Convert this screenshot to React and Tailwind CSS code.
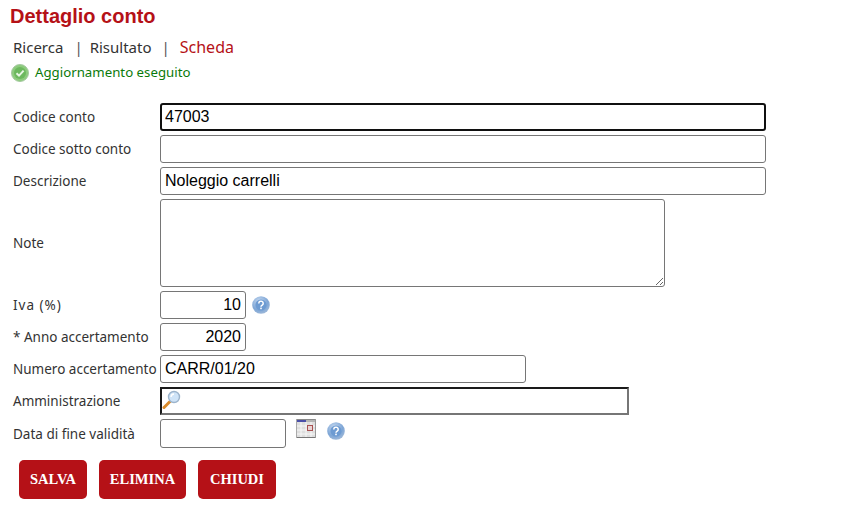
const lab = "w-[147px] shrink-0 pt-[1px] text-[13.5px] text-[#333] whitespace-nowrap";
const inp = "h-[28px] bg-white border border-[#767676] rounded-[3px] px-[4px] text-[16px] text-black outline-none font-['Liberation_Sans',sans-serif]";

function Help() {
  return (
    <svg width="18" height="18" viewBox="0 0 18 18" className="shrink-0">
      <defs>
        <radialGradient id="hg" cx="0.4" cy="0.3" r="0.8">
          <stop offset="0" stopColor="#c6d9f0" />
          <stop offset="0.6" stopColor="#7ea6d6" />
          <stop offset="1" stopColor="#a9bfda" />
        </radialGradient>
      </defs>
      <circle cx="9" cy="9" r="8.8" fill="url(#hg)" />
      <circle cx="9" cy="9" r="5.6" fill="#6d9bd2" />
      <path d="M6.8 7.4a2.2 2.2 0 1 1 3.4 1.8c-.8.5-1.2.8-1.2 1.6" fill="none" stroke="#fff" strokeWidth="1.5" />
      <rect x="8.2" y="11.6" width="1.6" height="1.6" fill="#fff" />
    </svg>
  );
}

function Calendar() {
  return (
    <svg width="20" height="19" viewBox="0 0 20 19" className="shrink-0">
      <rect x="0" y="0" width="20" height="19" fill="#dedede" />
      <rect x="0" y="0" width="20" height="1" fill="#8a8a8a" />
      <rect x="1" y="1" width="9" height="2" fill="#4a4fa8" />
      <rect x="10" y="1" width="10" height="2" fill="#b5b5b5" />
      <path d="M0 7h20M0 11h20M0 15h20M5 3v16M10 3v16M15 3v16" stroke="#f7f7f7" strokeWidth="1" />
      <rect x="11.5" y="6.5" width="5" height="5" fill="#e8d4d4" stroke="#a85050" strokeWidth="1" />
      <rect x="0" y="18" width="20" height="1" fill="#777" />
      <rect x="19" y="0" width="1" height="19" fill="#999" />
      <rect x="0" y="0" width="1" height="19" fill="#aaa" />
    </svg>
  );
}

function Lens() {
  return (
    <svg width="20" height="20" viewBox="0 0 20 20">
      <path d="M8 11.5 2 17.5" stroke="#d98a2b" strokeWidth="3" strokeLinecap="round" />
      <circle cx="12" cy="7" r="5.5" fill="#cfe4f8" stroke="#9cb4cc" strokeWidth="1.4" />
      <path d="M9 7a3.2 3.2 0 0 1 3-3" stroke="#fff" strokeWidth="1.4" fill="none" />
    </svg>
  );
}

function Check() {
  return (
    <svg width="18" height="18" viewBox="0 0 18 18" className="shrink-0">
      <circle cx="9" cy="9" r="8.5" fill="#8ccb7c" stroke="#a5c9a0" strokeWidth="1" />
      <circle cx="9" cy="9" r="6" fill="#6cb85e" />
      <path d="M5.5 9.2 8 11.6l4.6-5" fill="none" stroke="#e8f5e4" strokeWidth="2" />
    </svg>
  );
}

function Btn({ children, w }) {
  return (
    <button className={`${w} h-[39px] bg-[#b51117] rounded-[5px] text-white text-[14.5px] font-bold font-['Liberation_Serif',serif]`}>
      {children}
    </button>
  );
}

export default function App() {
  return (
    <div className="w-[862px] h-[523px] bg-white overflow-hidden font-['Noto_Sans',sans-serif]">
      <div className="pl-[10px] pt-[6px]">
        <h1 className="text-[20px] leading-[21px] font-bold text-[#b51117] font-['Liberation_Sans',sans-serif]">Dettaglio conto</h1>
      </div>
      <div className="pl-[13px] mt-[9px] flex items-center h-[22px] text-[15px] text-[#333]">
        <span>Ricerca</span>
        <span className="ml-[11px] mr-[7px] text-[#555]">|</span>
        <span>Risultato</span>
        <span className="ml-[10px] mr-[10px] text-[#555]">|</span>
        <span className="text-[#b51117] text-[16px]">Scheda</span>
      </div>
      <div className="pl-[11px] mt-[6px] flex items-center gap-[6px] h-[18px] text-[13.25px] text-[#0a7a0a]">
        <Check />
        <span>Aggiornamento eseguito</span>
      </div>
      <div className="ml-[13px] mt-[21px] flex flex-col gap-[4px]">
        <div className="flex items-center">
          <span className={lab}>Codice conto</span>
          <input readOnly value="47003" className="w-[606px] h-[28px] bg-white border-2 border-[#101010] rounded-[3px] px-[3px] text-[16px] text-black outline-none font-['Liberation_Sans',sans-serif]" />
        </div>
        <div className="flex items-center">
          <span className={lab}>Codice sotto conto</span>
          <input readOnly value="" className={`${inp} w-[606px]`} />
        </div>
        <div className="flex items-center">
          <span className={lab}>Descrizione</span>
          <input readOnly value="Noleggio carrelli" className={`${inp} w-[606px]`} />
        </div>
        <div className="flex items-center">
          <span className={lab}>Note</span>
          <textarea readOnly value="" className="w-[505px] h-[88px] bg-white border border-[#767676] rounded-[3px] outline-none block" />
        </div>
        <div className="flex items-center">
          <span className={`${lab} tracking-[1px]`}>Iva (%)</span>
          <input readOnly value="10" className={`${inp} w-[86px] text-right`} />
          <span className="ml-[6px] flex"><Help /></span>
        </div>
        <div className="flex items-center">
          <span className={lab}>* Anno accertamento</span>
          <input readOnly value="2020" className={`${inp} w-[86px] text-right`} />
        </div>
        <div className="flex items-center">
          <span className={lab}>Numero accertamento</span>
          <input readOnly value="CARR/01/20" className={`${inp} w-[366px]`} />
        </div>
        <div className="flex items-center">
          <span className={lab}>Amministrazione</span>
          <div className="w-[469px] h-[28px] bg-white border-2 border-t-[#1a1a1a] border-l-[#1a1a1a] border-r-[#767676] border-b-[#767676] flex items-start pt-[1px]">
            <Lens />
          </div>
        </div>
        <div className="flex items-center">
          <span className={lab}>Data di fine validità</span>
          <input readOnly value="" className={`${inp} w-[126px] h-[29px]`} />
          <span className="ml-[10px] mb-[10px] flex"><Calendar /></span>
          <span className="ml-[11px] mb-[5px] flex"><Help /></span>
        </div>
      </div>
      <div className="ml-[19px] mt-[12px] flex gap-[12px]">
        <Btn w="w-[68px]">SALVA</Btn>
        <Btn w="w-[87px]">ELIMINA</Btn>
        <Btn w="w-[78px]">CHIUDI</Btn>
      </div>
    </div>
  );
}
